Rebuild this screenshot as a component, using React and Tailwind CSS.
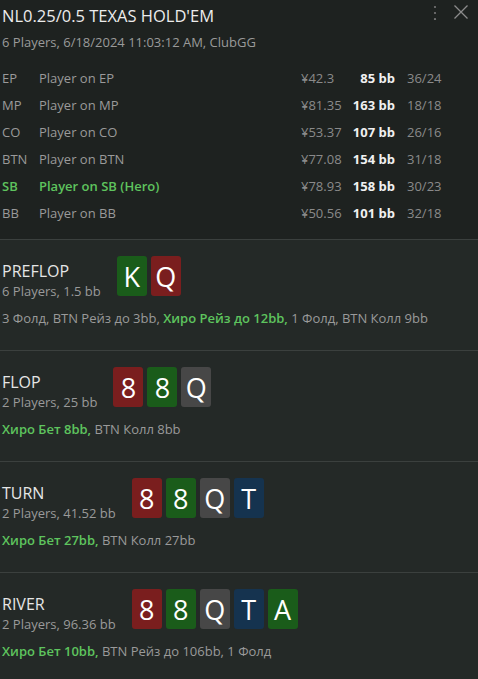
import React from "react";

const players = [
  { pos: "EP", name: "Player on EP", stack: "¥42.3", bb: "85 bb", ratio: "36/24" },
  { pos: "MP", name: "Player on MP", stack: "¥81.35", bb: "163 bb", ratio: "18/18" },
  { pos: "CO", name: "Player on CO", stack: "¥53.37", bb: "107 bb", ratio: "26/16" },
  { pos: "BTN", name: "Player on BTN", stack: "¥77.08", bb: "154 bb", ratio: "31/18" },
  { pos: "SB", name: "Player on SB (Hero)", stack: "¥78.93", bb: "158 bb", ratio: "30/23", hero: true },
  { pos: "BB", name: "Player on BB", stack: "¥50.56", bb: "101 bb", ratio: "32/18" },
];

const suitColors = {
  r: "bg-[#7a1e1e]",
  g: "bg-[#1a5c1a]",
  k: "bg-[#474747]",
  b: "bg-[#15334f]",
};

const streets = [
  {
    name: "PREFLOP",
    info: "6 Players, 1.5 bb",
    cards: [["K", "g"], ["Q", "r"]],
    pre: "3 Фолд, BTN Рейз до 3bb, ",
    hero: "Хиро Рейз до 12bb,",
    post: " 1 Фолд, BTN Колл 9bb",
  },
  {
    name: "FLOP",
    info: "2 Players, 25 bb",
    cards: [["8", "r"], ["8", "g"], ["Q", "k"]],
    pre: "",
    hero: "Хиро Бет 8bb,",
    post: " BTN Колл 8bb",
  },
  {
    name: "TURN",
    info: "2 Players, 41.52 bb",
    cards: [["8", "r"], ["8", "g"], ["Q", "k"], ["T", "b"]],
    pre: "",
    hero: "Хиро Бет 27bb,",
    post: " BTN Колл 27bb",
  },
  {
    name: "RIVER",
    info: "2 Players, 96.36 bb",
    cards: [["8", "r"], ["8", "g"], ["Q", "k"], ["T", "b"], ["A", "g"]],
    pre: "",
    hero: "Хиро Бет 10bb,",
    post: " BTN Рейз до 106bb, 1 Фолд",
  },
];

function Card({ rank, suit }) {
  return (
    <div
      className={`w-[30px] h-[40px] rounded-[3px] flex items-center justify-center text-white text-[27px] leading-none ${suitColors[suit]}`}
    >
      {rank}
    </div>
  );
}

function Street({ s }) {
  return (
    <div className="h-[111px] border-t border-[#3b403e] bg-[#242927] pl-[2px] pt-[16px]">
      <div className="flex items-start">
        <div className="pt-[6px]">
          <div className="text-[16px] leading-[18px] text-[#e6e6e6]">{s.name}</div>
          <div className="text-[13px] leading-[17px] mt-[3px] text-[#9a9a9a]">{s.info}</div>
        </div>
        <div className="flex gap-[4px] ml-[16px]">
          {s.cards.map((c, i) => (
            <Card key={i} rank={c[0]} suit={c[1]} />
          ))}
        </div>
      </div>
      <div className="mt-[10px] text-[13px] leading-[17px] text-[#9a9a9a]">
        {s.pre}
        <span className="font-semibold text-[#5ec45e]">{s.hero}</span>
        {s.post}
      </div>
    </div>
  );
}

export default function App() {
  return (
    <div
      className="w-[478px] h-[679px] overflow-hidden bg-[#1e2220]"
      style={{ fontFamily: '"Open Sans", "Noto Sans", sans-serif' }}
    >
      {/* Header */}
      <div className="relative pl-[2px] pt-[5px]">
        <h1 className="text-[16.5px] leading-[22px] text-[#ececec]">NL0.25/0.5 TEXAS HOLD'EM</h1>
        <div className="text-[13px] leading-[17px] mt-[7px] text-[#9a9a9a]">
          6 Players, 6/18/2024 11:03:12 AM, ClubGG
        </div>
        <div className="absolute right-[9px] top-[4px] flex items-center gap-[16px]">
          <svg width="4" height="16" viewBox="0 0 4 16">
            <circle cx="2" cy="3" r="1.1" fill="#777" />
            <circle cx="2" cy="9" r="1.1" fill="#777" />
            <circle cx="2" cy="15" r="1.1" fill="#777" />
          </svg>
          <svg width="16" height="16" viewBox="0 0 16 16">
            <path d="M1.5 1.5 L14.5 14.5 M14.5 1.5 L1.5 14.5" stroke="#8c8c8c" strokeWidth="1.3" />
          </svg>
        </div>
      </div>

      {/* Players */}
      <div className="mt-[14px] pb-[12px]">
        {players.map((p) => (
          <div key={p.pos} className="h-[27px] flex items-center pl-[2px] text-[13px]">
            <div className={`w-[37px] ${p.hero ? "text-[#5ec45e] font-semibold" : "text-[#9a9a9a]"}`}>{p.pos}</div>
            <div className={`w-[262px] ${p.hero ? "text-[#5ec45e] font-semibold" : "text-[#9a9a9a]"}`}>{p.name}</div>
            <div className="w-[48px] text-[#8a8a8a]">{p.stack}</div>
            <div className="w-[46px] text-right font-bold text-[#f0f0f0]">{p.bb}</div>
            <div className="ml-[12px] text-[#8a8a8a]">{p.ratio}</div>
          </div>
        ))}
      </div>

      {streets.map((s) => (
        <Street key={s.name} s={s} />
      ))}
    </div>
  );
}
